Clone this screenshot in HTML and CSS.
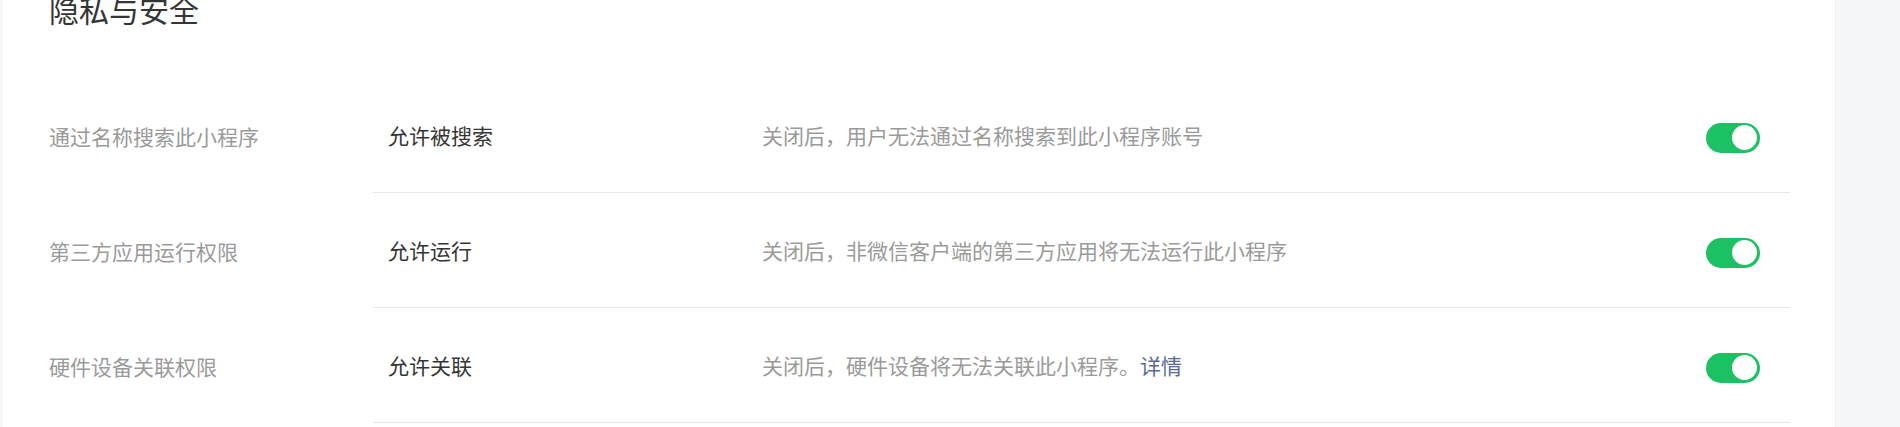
FILE: index.html
```html
<!DOCTYPE html>
<html lang="zh-CN">
<head>
<meta charset="utf-8">
<title>隐私与安全</title>
<link rel="stylesheet" href="styles.css">
</head>
<body>
<div class="page">
  <section class="panel">
    <h2 class="title">隐私与安全</h2>
    <ul class="settings">
      <li class="setting">
        <div class="setting-label">通过名称搜索此小程序</div>
        <div class="setting-body">
          <div class="setting-value">允许被搜索</div>
          <div class="setting-desc">关闭后，用户无法通过名称搜索到此小程序账号</div>
          <span class="switch is-on"><span class="switch-knob"></span></span>
        </div>
      </li>
      <li class="setting">
        <div class="setting-label">第三方应用运行权限</div>
        <div class="setting-body">
          <div class="setting-value">允许运行</div>
          <div class="setting-desc">关闭后，非微信客户端的第三方应用将无法运行此小程序</div>
          <span class="switch is-on"><span class="switch-knob"></span></span>
        </div>
      </li>
      <li class="setting">
        <div class="setting-label">硬件设备关联权限</div>
        <div class="setting-body">
          <div class="setting-value">允许关联</div>
          <div class="setting-desc">关闭后，硬件设备将无法关联此小程序。<a class="link" href="#">详情</a></div>
          <span class="switch is-on"><span class="switch-knob"></span></span>
        </div>
      </li>
    </ul>
  </section>
</div>
</body>
</html>
```

FILE: styles.css
```css
* {
  box-sizing: border-box;
}

html, body {
  margin: 0;
  padding: 0;
}

body {
  background: #f6f7f9;
  font-family: "Noto Sans CJK SC", "Noto Sans", sans-serif;
  color: #353535;
  overflow: hidden;
}

.page {
  display: flex;
  padding-left: 3px;
}

.panel {
  width: 1833px;
  background: #ffffff;
  border-right: 1px solid #eceef2;
  padding: 0 45px 40px 46px;
}

.title {
  margin: -6px 0 0;
  font-size: 30px;
  line-height: 30px;
  font-weight: 400;
  color: #353535;
}

.settings {
  list-style: none;
  margin: 0;
  padding: 0;
  padding-top: 54px;
}

.setting {
  display: flex;
  height: 115px;
}

.setting-label {
  width: 324px;
  flex: none;
  display: flex;
  align-items: center;
  font-size: 21px;
  color: #9a9a9a;
}

.setting-body {
  flex: 1;
  display: flex;
  align-items: center;
  padding: 0 30px 0 15px;
  border-bottom: 1px solid #e7e7eb;
}

.setting-value {
  width: 374px;
  flex: none;
  font-size: 21px;
  color: #353535;
}

.setting-desc {
  flex: 1;
  font-size: 21px;
  color: #9a9a9a;
}

.link {
  color: #576b95;
  text-decoration: none;
}

.switch {
  flex: none;
  width: 54px;
  height: 30px;
  margin-top: 5px;
  border-radius: 15px;
  display: flex;
  align-items: center;
  justify-content: flex-end;
  padding: 0 3px;
  background: #1bc163;
}

.switch-knob {
  width: 25px;
  height: 25px;
  border-radius: 50%;
  background: #ffffff;
}
```
